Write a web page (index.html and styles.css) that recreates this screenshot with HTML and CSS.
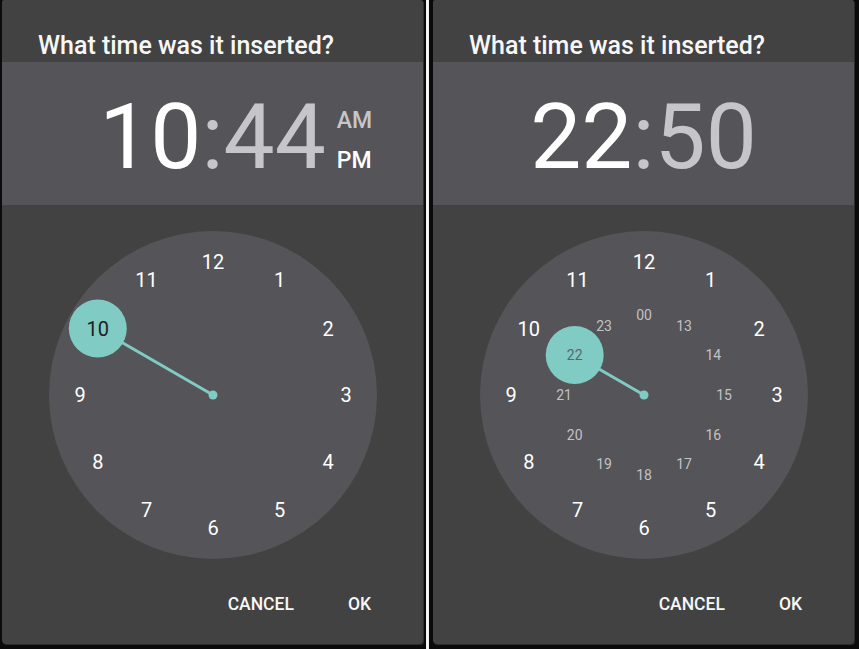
FILE: index.html
```html
<!DOCTYPE html>
<html lang="en">
<head>
<meta charset="utf-8">
<title>Time picker</title>
<link rel="stylesheet" href="styles.css">
</head>
<body>
<div class="screen">
  <section class="dialog">
    <h1 class="title">What time was it inserted?</h1>
    <div class="header">
      <div class="time">
        <span class="hours">10</span>
        <span class="colon">:</span>
        <span class="minutes-wrap">
          <span class="minutes">44</span>
          <span class="ampm"><span class="am">AM</span><span class="pm">PM</span></span>
        </span>
      </div>
    </div>
    <div class="clock">
      <svg class="face" width="328" height="328" viewBox="0 0 328 328">
        <circle class="dial" cx="164" cy="164" r="164"/>
        <line class="hand" x1="164" y1="164" x2="48.8" y2="97.5"/>
        <circle class="pivot" cx="164" cy="164" r="4.5"/>
        <circle class="sel" cx="48.8" cy="97.5" r="29"/>
        <g class="outer">
          <text x="164" y="38.1">12</text>
          <text x="230.5" y="55.9">1</text>
          <text x="279.2" y="104.6">2</text>
          <text x="297" y="171.1">3</text>
          <text x="279.2" y="237.6">4</text>
          <text x="230.5" y="286.3">5</text>
          <text x="164" y="304.1">6</text>
          <text x="97.5" y="286.3">7</text>
          <text x="48.8" y="237.6">8</text>
          <text x="31" y="171.1">9</text>
          <text class="on" x="48.8" y="104.6">10</text>
          <text x="97.5" y="55.9">11</text>
        </g>
      </svg>
    </div>
    <div class="actions">
      <span class="btn">CANCEL</span>
      <span class="btn">OK</span>
    </div>
  </section>

  <div class="divider"></div>

  <section class="dialog">
    <h1 class="title">What time was it inserted?</h1>
    <div class="header">
      <div class="time">
        <span class="hours">22</span>
        <span class="colon">:</span>
        <span class="minutes-wrap">
          <span class="minutes">50</span>
        </span>
      </div>
    </div>
    <div class="clock">
      <svg class="face" width="328" height="328" viewBox="0 0 328 328">
        <circle class="dial" cx="164" cy="164" r="164"/>
        <line class="hand" x1="164" y1="164" x2="94.7" y2="124"/>
        <circle class="pivot" cx="164" cy="164" r="4.5"/>
        <circle class="sel" cx="94.7" cy="124" r="29"/>
        <g class="outer">
          <text x="164" y="38.1">12</text>
          <text x="230.5" y="55.9">1</text>
          <text x="279.2" y="104.6">2</text>
          <text x="297" y="171.1">3</text>
          <text x="279.2" y="237.6">4</text>
          <text x="230.5" y="286.3">5</text>
          <text x="164" y="304.1">6</text>
          <text x="97.5" y="286.3">7</text>
          <text x="48.8" y="237.6">8</text>
          <text x="31" y="171.1">9</text>
          <text x="48.8" y="104.6">10</text>
          <text x="97.5" y="55.9">11</text>
        </g>
        <g class="inner">
          <text x="164" y="89">00</text>
          <text x="204" y="99.7">13</text>
          <text x="233.3" y="129">14</text>
          <text x="244" y="169">15</text>
          <text x="233.3" y="209">16</text>
          <text x="204" y="238.3">17</text>
          <text x="164" y="249">18</text>
          <text x="124" y="238.3">19</text>
          <text x="94.7" y="209">20</text>
          <text x="84" y="169">21</text>
          <text class="on" x="94.7" y="129">22</text>
          <text x="124" y="99.7">23</text>
        </g>
      </svg>
    </div>
    <div class="actions">
      <span class="btn">CANCEL</span>
      <span class="btn">OK</span>
    </div>
  </section>
</div>
</body>
</html>
```

FILE: styles.css
```css
* { box-sizing: border-box; }

html, body {
  margin: 0;
  padding: 0;
  background: #0b0b0c;
  width: 859px;
  height: 649px;
  overflow: hidden;
  font-family: Roboto, "Noto Sans", "Liberation Sans", sans-serif;
}

.screen {
  display: flex;
  align-items: flex-start;
  padding-left: 2px;
  height: 649px;
}

.dialog {
  width: 421px;
  height: 644px;
  background: #424242;
  border-radius: 2px 2px 4px 4px;
  box-shadow: 1px 1px 0 #2c2c2c;
  display: flex;
  flex-direction: column;
  overflow: hidden;
}

.divider {
  width: 3px;
  height: 649px;
  margin: 0 4px 0 3px;
  background: #f4f4f4;
}

.title {
  margin: 0;
  height: 62px;
  padding: 32px 0 0 36px;
  font-size: 25px;
  line-height: 28px;
  font-weight: 500;
  color: #f7f7f7;
  white-space: nowrap;
}

.header {
  height: 143px;
  background: #555458;
  display: flex;
  align-items: center;
  padding-top: 8px;
}

.time {
  width: 100%;
  display: grid;
  grid-template-columns: 1fr auto 1fr;
  align-items: baseline;
  font-size: 91px;
  line-height: 1;
  font-weight: 400;
}

.hours {
  justify-self: end;
  color: #ffffff;
}

.colon {
  color: #c6c6ca;
}

.minutes-wrap {
  display: flex;
  align-items: last baseline;
}

.minutes {
  color: #c6c6ca;
}

.ampm {
  display: flex;
  flex-direction: column;
  margin-left: 11px;
  font-size: 23px;
  line-height: 40px;
  font-weight: 500;
}

.am { color: #c6c6ca; }
.pm { color: #ffffff; }

.clock {
  display: flex;
  justify-content: center;
  padding-top: 26px;
}

.face { display: block; }

.dial { fill: #555458; }

.hand {
  stroke: #80cbc4;
  stroke-width: 3;
}

.pivot, .sel { fill: #80cbc4; }

.face text {
  text-anchor: middle;
  font-family: Roboto, "Noto Sans", sans-serif;
}

.outer text {
  font-size: 20px;
  fill: #ffffff;
}

.outer text.on { fill: #202020; }

.inner text {
  font-size: 14px;
  fill: #c2c2c4;
}

.inner text.on { fill: #5c6765; }

.actions {
  display: flex;
  justify-content: flex-end;
  padding: 35px 44px 0 0;
  gap: 38px;
}

.btn {
  font-size: 17.5px;
  line-height: 20px;
  font-weight: 500;
  color: #f7f7f7;
  padding: 0 8px;
}
```
